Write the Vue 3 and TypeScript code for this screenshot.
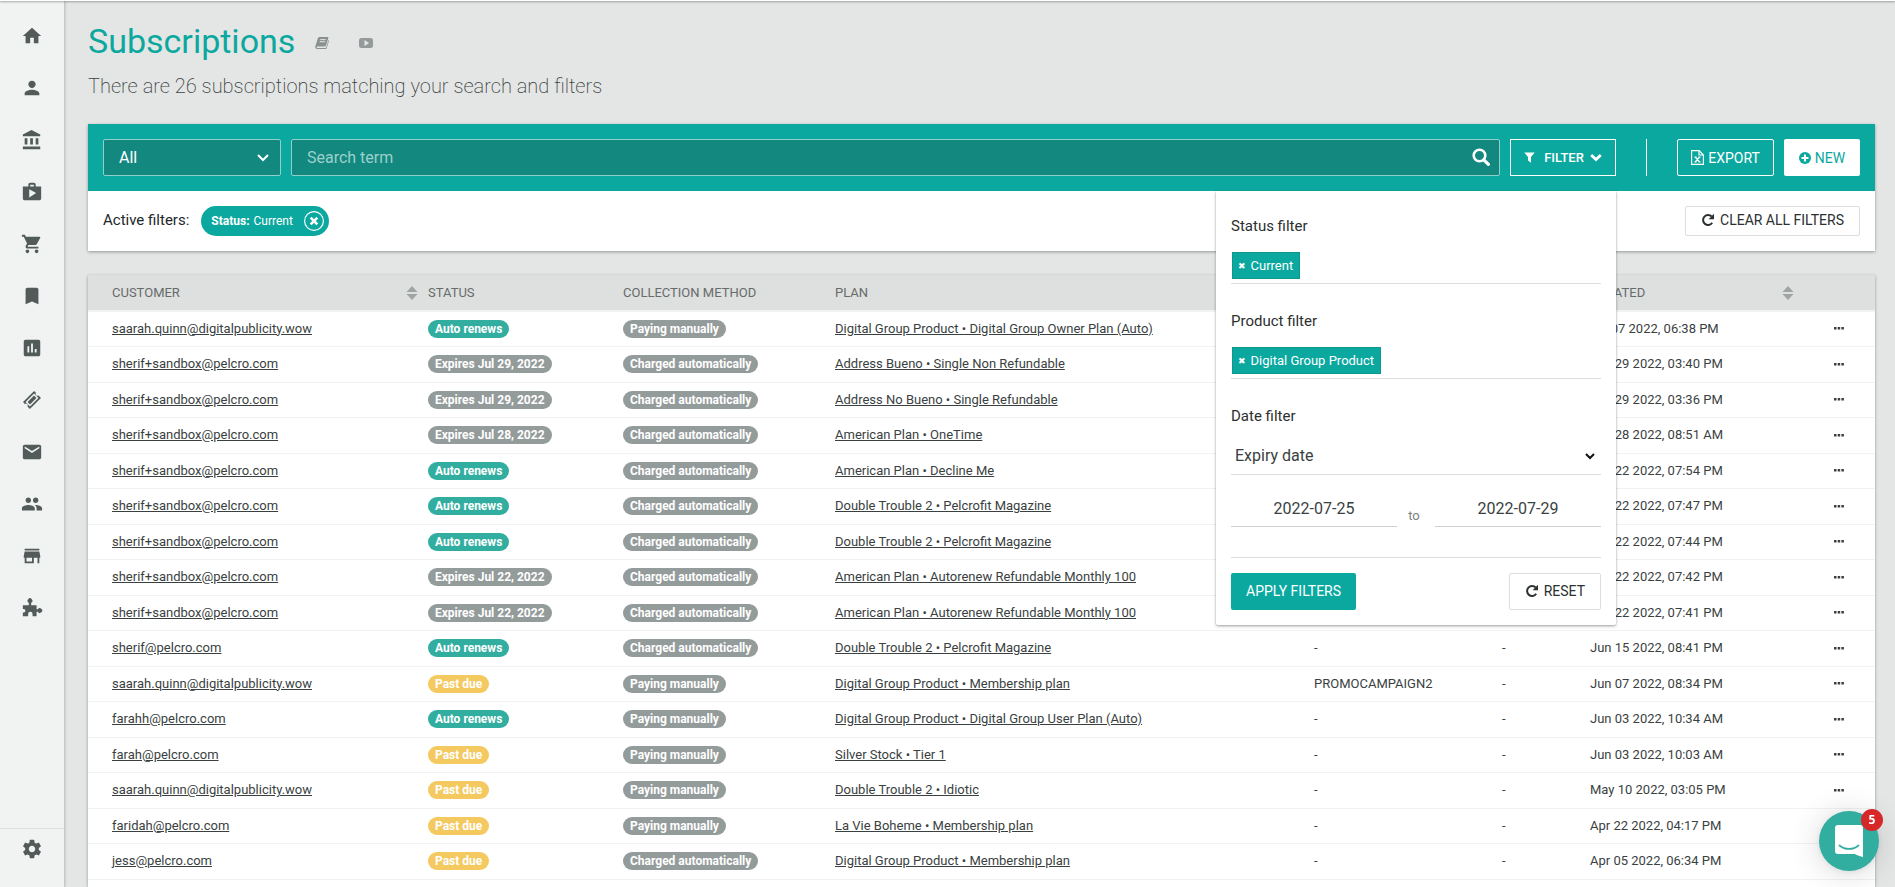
<script setup lang="ts">
import { ref } from 'vue'

interface NavItem { label: string; path: string }
interface Subscription {
  customer: string
  status: string
  tone: 'renews' | 'neutral' | 'due'
  method: string
  plan: string
  coupon: string
  created: string
}

const nav: NavItem[] = [
  { label: 'Home', path: 'M10 20v-6h4v6h5v-8h3L12 3 2 12h3v8z' },
  { label: 'Customers', path: 'M12 12c2.21 0 4-1.79 4-4s-1.79-4-4-4-4 1.79-4 4 1.79 4 4 4zm0 2c-2.67 0-8 1.34-8 4v2h16v-2c0-2.66-5.33-4-8-4z' },
  { label: 'Accounts', path: 'M4 10v7h3v-7H4zm6 0v7h3v-7h-3zM2 22h19v-3H2v3zm14-12v7h3v-7h-3zm-4.500-9L2 6v2h19V6l-9.500-5z' },
  { label: 'Products', path: 'M16 6V4c0-1.110-.89-2-2-2h-4c-1.110 0-2 .89-2 2v2H2v13c0 1.110.89 2 2 2h16c1.110 0 2-.89 2-2V6h-6zm-6-2h4v2h-4V4zM9 18V9l7.500 4L9 18z' },
  { label: 'Orders', path: 'M7 18c-1.100 0-1.990.9-1.990 2S5.900 22 7 22s2-.9 2-2-.9-2-2-2zM1 2v2h2l3.600 7.590-1.350 2.450c-.16.28-.25.61-.25.96 0 1.100.9 2 2 2h12v-2H7.420c-.14 0-.25-.11-.25-.25l.03-.12.9-1.630h7.450c.75 0 1.410-.41 1.750-1.030l3.580-6.490A1 1 0 0 0 20 4H5.210l-.94-2H1zm16 16c-1.100 0-1.990.9-1.990 2s.89 2 1.990 2 2-.9 2-2-.9-2-2-2z' },
  { label: 'Subscriptions', path: 'M17 3H7c-1.100 0-2 .9-2 2v16l7-3 7 3V5c0-1.100-.9-2-2-2z' },
  { label: 'Reports', path: 'M19 3H5c-1.100 0-2 .9-2 2v14c0 1.100.9 2 2 2h14c1.100 0 2-.9 2-2V5c0-1.100-.9-2-2-2zM9 17H7v-7h2v7zm4 0h-2V7h2v10zm4 0h-2v-4h2v4z' },
  { label: 'Coupons', path: 'M14.300 2.200 2.200 14.300l2 2a2 2 0 0 1 2.800 2.800l2.700 2.700L21.800 9.700l-2.700-2.700a2 2 0 0 1-2.800-2.800zM14.200 5l4.800 4.800-9.200 9.200L5 14.200zM14.200 7.200 7.200 14.200l2.600 2.600 7-7z' },
  { label: 'Messages', path: 'M20 4H4c-1.100 0-1.990.9-1.990 2L2 18c0 1.100.9 2 2 2h16c1.100 0 2-.9 2-2V6c0-1.100-.9-2-2-2zm0 4l-8 5-8-5V6l8 5 8-5v2z' },
  { label: 'Users', path: 'M16 11c1.660 0 2.990-1.340 2.990-3S17.660 5 16 5s-3 1.340-3 3 1.340 3 3 3zm-8 0c1.660 0 2.990-1.340 2.990-3S9.660 5 8 5 5 6.340 5 8s1.340 3 3 3zm0 2c-2.330 0-7 1.170-7 3.500V19h14v-2.500c0-2.330-4.670-3.500-7-3.500zm8 0c-.29 0-.62.02-.97.05 1.160.84 1.970 1.970 1.970 3.450V19h6v-2.500c0-2.330-4.670-3.500-7-3.500z' },
  { label: 'Store', path: 'M20 4H4v2h16V4zm1 10v-2l-1-5H4l-1 5v2h1v6h10v-6h4v6h2v-6h1zm-9 4H6v-4h6v4z' },
  { label: 'Integrations', path: 'M2 9h6.500V6.300a2.600 2.600 0 1 1 2.600 0V9H17v4.400h1.300a2.600 2.600 0 1 1 0 2.800H17V21h-4.400v-2.400a2.400 2.400 0 0 0-4.800 0V21H2v-4.200h1a1.800 1.800 0 0 0 0-3.600H2z' },
]

const gear = 'M19.430 12.980c.04-.32.07-.64.07-.98s-.03-.66-.07-.98l2.110-1.650c.19-.15.24-.42.12-.64l-2-3.460c-.12-.22-.39-.3-.61-.22l-2.490 1c-.52-.4-1.080-.73-1.690-.98l-.38-2.650A.488.488 0 0 0 14 2h-4c-.25 0-.46.18-.49.42l-.38 2.650c-.61.25-1.170.59-1.690.98l-2.490-1c-.23-.09-.49 0-.61.22l-2 3.460c-.13.22-.07.49.12.64l2.110 1.650c-.04.32-.07.65-.07.98s.03.66.07.98l-2.110 1.650c-.19.15-.24.42-.12.64l2 3.460c.12.22.39.3.61.22l2.490-1c.52.4 1.080.73 1.690.98l.38 2.650c.03.24.24.42.49.42h4c.25 0 .46-.18.49-.42l.38-2.650c.61-.25 1.170-.59 1.690-.98l2.490 1c.23.09.49 0 .61-.22l2-3.460c.12-.22.07-.49-.12-.64l-2.110-1.650zM12 15.500c-1.930 0-3.500-1.570-3.500-3.500s1.570-3.500 3.500-3.500 3.500 1.570 3.500 3.500-1.570 3.500-3.500 3.500z'

const MANUAL = 'Paying manually'
const AUTO = 'Charged automatically'

function row(customer: string, status: string, method: string, plan: string, created: string, coupon = '-'): Subscription {
  const tone = status === 'Auto renews' ? 'renews' : status === 'Past due' ? 'due' : 'neutral'
  return { customer, status, tone, method, plan, coupon, created }
}

const rows: Subscription[] = [
  row('saarah.quinn@digitalpublicity.wow', 'Auto renews', MANUAL, 'Digital Group Product • Digital Group Owner Plan (Auto)', 'Jul 07 2022, 06:38 PM'),
  row('sherif+sandbox@pelcro.com', 'Expires Jul 29, 2022', AUTO, 'Address Bueno • Single Non Refundable', 'Jun 29 2022, 03:40 PM'),
  row('sherif+sandbox@pelcro.com', 'Expires Jul 29, 2022', AUTO, 'Address No Bueno • Single Refundable', 'Jun 29 2022, 03:36 PM'),
  row('sherif+sandbox@pelcro.com', 'Expires Jul 28, 2022', AUTO, 'American Plan • OneTime', 'Jun 28 2022, 08:51 AM'),
  row('sherif+sandbox@pelcro.com', 'Auto renews', AUTO, 'American Plan • Decline Me', 'Jun 22 2022, 07:54 PM'),
  row('sherif+sandbox@pelcro.com', 'Auto renews', AUTO, 'Double Trouble 2 • Pelcrofit Magazine', 'Jun 22 2022, 07:47 PM'),
  row('sherif+sandbox@pelcro.com', 'Auto renews', AUTO, 'Double Trouble 2 • Pelcrofit Magazine', 'Jun 22 2022, 07:44 PM'),
  row('sherif+sandbox@pelcro.com', 'Expires Jul 22, 2022', AUTO, 'American Plan • Autorenew Refundable Monthly 100', 'Jun 22 2022, 07:42 PM'),
  row('sherif+sandbox@pelcro.com', 'Expires Jul 22, 2022', AUTO, 'American Plan • Autorenew Refundable Monthly 100', 'Jun 22 2022, 07:41 PM'),
  row('sherif@pelcro.com', 'Auto renews', AUTO, 'Double Trouble 2 • Pelcrofit Magazine', 'Jun 15 2022, 08:41 PM'),
  row('saarah.quinn@digitalpublicity.wow', 'Past due', MANUAL, 'Digital Group Product • Membership plan', 'Jun 07 2022, 08:34 PM', 'PROMOCAMPAIGN2'),
  row('farahh@pelcro.com', 'Auto renews', MANUAL, 'Digital Group Product • Digital Group User Plan (Auto)', 'Jun 03 2022, 10:34 AM'),
  row('farah@pelcro.com', 'Past due', MANUAL, 'Silver Stock • Tier 1', 'Jun 03 2022, 10:03 AM'),
  row('saarah.quinn@digitalpublicity.wow', 'Past due', MANUAL, 'Double Trouble 2 • Idiotic', 'May 10 2022, 03:05 PM'),
  row('faridah@pelcro.com', 'Past due', MANUAL, 'La Vie Boheme • Membership plan', 'Apr 22 2022, 04:17 PM'),
  row('jess@pelcro.com', 'Past due', AUTO, 'Digital Group Product • Membership plan', 'Apr 05 2022, 06:34 PM'),
]

const scope = ref('All')
const term = ref('')
const dateField = ref('Expiry date')
const from = ref('2022-07-25')
const to = ref('2022-07-29')
</script>

<template>
  <div class="app">
    <div class="topline"></div>
    <div class="shell">
      <nav class="sidebar" aria-label="Main">
        <div class="nav-list">
          <a v-for="item in nav" :key="item.label" href="#" class="nav-link" :aria-label="item.label">
            <svg class="nav-icon" viewBox="0 0 24 24"><path fill-rule="evenodd" :d="item.path" /></svg>
          </a>
        </div>
        <a href="#" class="nav-link settings" aria-label="Settings">
          <svg class="nav-icon" viewBox="0 0 24 24"><path :d="gear" /></svg>
        </a>
      </nav>

      <main class="content">
        <header class="heading">
          <h1>Subscriptions</h1>
          <a href="#" class="help" aria-label="Documentation">
            <svg width="14" height="14" viewBox="0 0 14 14">
              <path d="M4.500 1h8.200c.6 0 .8.400.6 1l-2.300 7.600c-.2.500-.5.800-1 .8H2.300c-.8 0-1 1.500 0 1.500h8.200c.4 0 .7-.2.800-.6L13.500 4c.4.300.5.600.4 1l-2.200 7.200c-.2.500-.6.800-1.100.8H2.100C.7 13-.1 11.600.3 10.400L2.900 2c.3-.7.900-1 1.600-1z" fill="#8b9191" />
              <path d="M5.300 3.600h5.400M4.700 5.700h5.400" stroke="#e4e6e5" />
            </svg>
          </a>
          <a href="#" class="help video" aria-label="Video guide">
            <svg width="14" height="10" viewBox="0 0 14 10">
              <path fill-rule="evenodd" d="M2.500 0h9A2.500 2.500 0 0 1 14 2.500v5a2.500 2.500 0 0 1-2.500 2.500h-9A2.500 2.500 0 0 1 0 7.500v-5A2.500 2.500 0 0 1 2.500 0zm3 2.100v5.800L10 5z" fill="#949a9a" />
            </svg>
          </a>
        </header>
        <p class="summary">There are 26 subscriptions matching your search and filters</p>

        <section class="card filters">
          <div class="toolbar">
            <div class="scope">
              <select v-model="scope" aria-label="Search in"><option>All</option></select>
              <svg class="caret" width="14" height="10" viewBox="0 0 14 10"><path d="M2 2l5 5 5-5" fill="none" stroke="#fff" stroke-width="2" /></svg>
            </div>
            <div class="search">
              <input v-model="term" type="text" placeholder="Search term" aria-label="Search term" />
              <button type="button" class="magnify" aria-label="Search">
                <svg width="18" height="18" viewBox="0 0 18 18"><circle cx="7.500" cy="7.500" r="5.800" fill="none" stroke="#fff" stroke-width="2.600" /><path d="M11.800 11.800l4.600 4.600" stroke="#fff" stroke-width="3.200" stroke-linecap="round" /></svg>
              </button>
            </div>
            <div class="filter-menu">
              <button type="button" class="btn outline square" aria-expanded="true">
                <svg width="11" height="11" viewBox="0 0 11 11"><path d="M.3.500h10.400L7 5v5.700L4 8.400V5z" fill="#fff" /></svg>
                <span class="filter-label">FILTER</span>
                <svg width="12" height="9" viewBox="0 0 12 9"><path d="M1.200 2L6 6.500 10.800 2" fill="none" stroke="#fff" stroke-width="2.800" /></svg>
              </button>
              <form class="panel" @submit.prevent>
                <h2>Status filter</h2>
                <div class="tags">
                  <span class="tag"><button type="button" aria-label="Remove Current">✖</button>Current</span>
                </div>
                <h2>Product filter</h2>
                <div class="tags">
                  <span class="tag"><button type="button" aria-label="Remove Digital Group Product">✖</button>Digital Group Product</span>
                </div>
                <h2>Date filter</h2>
                <div class="date-field">
                  <select v-model="dateField" aria-label="Date filter"><option>Expiry date</option></select>
                  <svg class="caret" width="12" height="9" viewBox="0 0 12 9"><path d="M2 2l4 4 4-4" fill="none" stroke="#111" stroke-width="2" /></svg>
                </div>
                <div class="range">
                  <input v-model="from" type="text" aria-label="From date" />
                  <span>to</span>
                  <input v-model="to" type="text" aria-label="To date" />
                </div>
                <div class="actions">
                  <button type="submit" class="btn primary">APPLY FILTERS</button>
                  <button type="button" class="btn plain">
                    <svg width="14" height="14" viewBox="0 0 14 14"><path d="M11.200 9.800A5 5 0 1 1 10.700 3.500" fill="none" stroke="#2b3030" stroke-width="2" /><path d="M13 .800v5.400H7.600z" fill="#2b3030" /></svg>
                    RESET
                  </button>
                </div>
              </form>
            </div>
            <span class="divider"></span>
            <button type="button" class="btn outline export">
              <svg width="13" height="15" viewBox="0 0 13 15"><path d="M.6.600h7.600L12.400 5v9.400H.6zM8 .600V5h4.400" fill="none" stroke="#fff" stroke-width="1.200" /><path d="M4.200 7l4.400 5M8.600 7l-4.400 5M3.400 7h2.200M7.400 7h2.200M3.400 12h2.200M7.400 12h2.200" stroke="#fff" stroke-width="1.200" /></svg>
              EXPORT
            </button>
            <button type="button" class="btn new">
              <svg width="12" height="12" viewBox="0 0 12 12"><circle cx="6" cy="6" r="6" fill="#0ba89f" /><path d="M6 2.500v7M2.500 6h7" stroke="#fff" stroke-width="2" /></svg>
              NEW
            </button>
          </div>
          <div class="active">
            <span class="active-label">Active filters:</span>
            <span class="pill">
              <strong>Status:</strong> Current
              <button type="button" aria-label="Remove status filter">
                <svg width="20" height="20" viewBox="0 0 20 20"><circle cx="10" cy="10" r="9.400" fill="none" stroke="#fff" stroke-width="1.200" /><path d="M6.700 6.700l6.600 6.600M13.300 6.700l-6.600 6.600" stroke="#fff" stroke-width="2.600" /></svg>
              </button>
            </span>
            <button type="button" class="btn plain clear">
              <svg width="14" height="14" viewBox="0 0 14 14"><path d="M11.200 9.800A5 5 0 1 1 10.700 3.500" fill="none" stroke="#2b3030" stroke-width="2" /><path d="M13 .800v5.400H7.600z" fill="#2b3030" /></svg>
              CLEAR ALL FILTERS
            </button>
          </div>
        </section>

        <section class="card results">
          <table>
            <colgroup>
              <col class="c-customer" /><col class="c-status" /><col class="c-method" /><col />
              <col class="c-coupon" /><col class="c-qty" /><col class="c-created" /><col class="c-menu" />
            </colgroup>
            <thead>
              <tr>
                <th scope="col">
                  <div class="sortable">CUSTOMER
                    <svg width="12" height="14" viewBox="0 0 12 14"><path d="M6 0l5.500 6H.5zM6 14L.5 8h11z" fill="#a0a4a4" /></svg>
                  </div>
                </th>
                <th scope="col">STATUS</th>
                <th scope="col">COLLECTION METHOD</th>
                <th scope="col">PLAN</th>
                <th></th>
                <th></th>
                <th scope="col">
                  <div class="sortable">CREATED
                    <svg width="12" height="14" viewBox="0 0 12 14"><path d="M6 0l5.500 6H.5zM6 14L.5 8h11z" fill="#a0a4a4" /></svg>
                  </div>
                </th>
                <th></th>
              </tr>
            </thead>
            <tbody>
              <tr v-for="(r, i) in rows" :key="i">
                <td><a href="#">{{ r.customer }}</a></td>
                <td><span class="badge" :class="r.tone">{{ r.status }}</span></td>
                <td><span class="badge neutral">{{ r.method }}</span></td>
                <td><a href="#">{{ r.plan }}</a></td>
                <td>{{ r.coupon }}</td>
                <td>-</td>
                <td>{{ r.created }}</td>
                <td>
                  <button type="button" class="more" aria-label="Row actions">
                    <svg width="10" height="3" viewBox="0 0 10 3"><path d="M0 0h2.500v2.500H0zM3.700 0h2.500v2.500H3.700zM7.400 0h2.500v2.500H7.400z" fill="#3a3f3f" /></svg>
                  </button>
                </td>
              </tr>
            </tbody>
          </table>
        </section>
      </main>
    </div>

    <button type="button" class="chat" aria-label="Open chat">
      <svg width="28" height="32" viewBox="0 0 28 32">
        <path d="M3 0h22a3 3 0 0 1 3 3v29s-5-1-8-3H3a3 3 0 0 1-3-3V3a3 3 0 0 1 3-3z" fill="#fff" />
        <path d="M4.500 20.500c5.500 4.600 13.500 4.600 19 0" fill="none" stroke="#32aea1" stroke-width="1.800" stroke-linecap="round" />
      </svg>
      <span class="count">5</span>
    </button>
  </div>
</template>

<style>
body {
  margin: 0;
  background: #e4e6e5;
}
</style>

<style scoped>
.app {
  height: 100vh;
  overflow: hidden;
  display: flex;
  flex-direction: column;
  background: #e4e6e5;
  color: #3a3f3f;
  font-family: Roboto, "Liberation Sans", sans-serif;
  font-size: 13px;
  line-height: 18px;
}
*, *::before, *::after { box-sizing: border-box; }
button, input, select { font: inherit; color: inherit; margin: 0; }
button { cursor: pointer; }
svg { display: block; flex: none; }

.topline {
  flex: none;
  height: 1px;
  background: #fff;
  box-shadow: 0 1px 2px rgba(0, 0, 0, 0.45);
  position: relative;
  z-index: 3;
}
.shell { flex: 1; min-height: 0; display: flex; }

.sidebar {
  flex: none;
  width: 65px;
  display: flex;
  flex-direction: column;
  justify-content: space-between;
  background: #f1f3f3;
  border-right: 1px solid #c4c8c7;
  box-shadow: 1px 0 2px rgba(0, 0, 0, 0.1);
}
.nav-list { padding-top: 9px; }
.nav-link {
  display: flex;
  align-items: center;
  justify-content: center;
  height: 52px;
}
.nav-icon { width: 22px; height: 22px; fill: #525a5a; }
.settings { height: 59px; padding-bottom: 19px; border-top: 1px solid #dcdfde; }

.content {
  flex: 1;
  min-width: 0;
  display: flex;
  flex-direction: column;
  padding: 16px 20px 0 23px;
}
.heading { display: flex; align-items: center; }
h1 {
  margin: 0;
  font-size: 34px;
  line-height: 48px;
  font-weight: 400;
  color: #0ba89f;
}
.help { margin: 4px 0 0 20px; }
.video { margin-left: 30px; }
.summary {
  margin: 7px 0 24px;
  font-size: 20px;
  line-height: 28px;
  font-weight: 200;
}

.card {
  background: #fff;
  box-shadow: 0 1px 3px rgba(0, 0, 0, 0.35);
}
.filters { margin-bottom: 24px; }
.results { flex: 1; }
.toolbar {
  display: flex;
  align-items: center;
  height: 67px;
  padding: 0 15px;
  background: #0ba89f;
}
.scope { position: relative; width: 178px; margin-right: 10px; }
.scope select, .search input {
  width: 100%;
  height: 37px;
  padding: 0 15px;
  border: 1px solid #8fd0cb;
  border-radius: 2px;
  background: #13887f;
  color: #fff;
  font-size: 16px;
  appearance: none;
  display: block;
}
.scope .caret { position: absolute; right: 11px; top: 14px; pointer-events: none; }
.search { position: relative; flex: 1; margin-right: 10px; }
.search input::placeholder { color: #9cd0cb; opacity: 1; }
.magnify {
  position: absolute;
  right: 10px;
  top: 9px;
  padding: 0;
  border: 0;
  background: none;
}

.btn {
  display: flex;
  align-items: center;
  justify-content: center;
  gap: 4px;
  height: 37px;
  padding: 0 14px;
  border: 1px solid transparent;
  border-radius: 2px;
  font-size: 14px;
  white-space: nowrap;
}
.outline { border-color: #fff; background: #0ba89f; color: #fff; }
.square { width: 106px; border-radius: 0; font-size: 13px; font-weight: 500; }
.filter-label { margin: 0 2px 0 5px; }
.divider { width: 1px; height: 37px; margin: 0 30px; background: #fff; }
.export { width: 97px; margin-right: 10px; }
.new { width: 76px; background: #fff; color: #0ba89f; }
.primary { padding-bottom: 2px; background: #0ba89f; color: #fff; }
.plain {
  gap: 5px;
  padding: 0 15px 2px;
  background: #fff;
  border-color: #dcdfde;
  color: #2b3030;
}

.filter-menu { position: relative; }
.panel {
  position: absolute;
  z-index: 2;
  top: 52px;
  right: 0;
  width: 400px;
  padding: 25px 15px 15px;
  background: #fff;
  border-radius: 0 0 2px 2px;
  box-shadow: 0 1px 3px rgba(0, 0, 0, 0.4);
}
h2 {
  margin: 0;
  font-size: 15px;
  line-height: 20px;
  font-weight: 400;
  color: #2b3030;
}
.tags {
  margin: 15px 0 27px;
  padding: 1px 0 4px;
  border-bottom: 1px solid #dcdfde;
  display: flex;
}
.tag {
  display: flex;
  align-items: center;
  height: 27px;
  margin-left: 1px;
  padding: 0 6px 0 5px;
  border: 1px solid #0c988f;
  background: #0ba89f;
  color: #fff;
}
.tag button {
  padding: 0 5px 0 0;
  border: 0;
  background: none;
  font-family: "DejaVu Sans", sans-serif;
  font-size: 9px;
  font-weight: 700;
}
.date-field { position: relative; margin-top: 11px; }
.date-field select {
  display: block;
  width: 100%;
  height: 38px;
  padding: 0 4px;
  border: 0;
  border-bottom: 1px solid #dcdfde;
  background: #fff;
  font-size: 16px;
  appearance: none;
}
.date-field .caret { position: absolute; right: 5px; top: 15px; pointer-events: none; }
.range {
  display: flex;
  align-items: flex-end;
  margin-top: 15px;
  padding-bottom: 30px;
  border-bottom: 1px solid #dcdfde;
}
.range input {
  flex: 1;
  min-width: 0;
  height: 37px;
  padding: 0;
  border: 0;
  border-bottom: 1px solid #cfd3d2;
  background: none;
  font-size: 16px;
  text-align: center;
}
.range span { width: 38px; text-align: center; color: #7c8282; padding: 0 4px 2px 0; }
.actions { display: flex; justify-content: space-between; margin-top: 15px; }

.active {
  display: flex;
  align-items: center;
  height: 60px;
  padding: 0 15px;
}
.active-label { padding-bottom: 2px; font-size: 15px; color: #222727; }
.pill {
  display: flex;
  align-items: center;
  gap: 4px;
  height: 30px;
  margin-left: 12px;
  padding: 0 5px 0 10px;
  border-radius: 15px;
  background: #0ba89f;
  color: #fff;
  font-size: 12px;
}
.pill button { margin-left: 7px; padding: 0; border: 0; background: none; }
.clear { height: 30px; margin-left: auto; }

table { width: 100%; border-collapse: collapse; table-layout: fixed; }
.c-customer { width: 332px; }
.c-status { width: 195px; }
.c-method { width: 212px; }
.c-coupon { width: 188px; }
.c-qty { width: 88px; }
.c-created { width: 220px; }
.c-menu { width: 73px; }
th, td { padding: 0 8px; text-align: left; font-weight: 400; white-space: nowrap; }
th:first-child, td:first-child { padding: 0 2px 0 24px; }
td:last-child { padding: 0 31px 0 0; }
th {
  height: 36px;
  background: #dee0df;
  border-bottom: 2px solid #f1f3f3;
  color: #666b6b;
}
.sortable { display: flex; align-items: center; justify-content: space-between; }
td { height: 36px; border-bottom: 1px solid #f1f3f3; }
tbody tr:nth-child(odd) td { height: 35px; }
td a { color: inherit; text-decoration: underline; }
.badge {
  display: inline-block;
  height: 18px;
  padding: 0 7px;
  border-radius: 9px;
  color: #fff;
  font-size: 12px;
  font-weight: 700;
}
.neutral { background: #949b9b; }
.renews { background: #32aea1; }
.due { background: #f4c960; }
.more { display: block; margin-left: auto; padding: 4px 0; border: 0; background: none; }

.chat {
  position: fixed;
  right: 16px;
  bottom: 16px;
  z-index: 5;
  width: 60px;
  height: 60px;
  padding: 0;
  border: 0;
  border-radius: 50%;
  background: #32aea1;
  box-shadow: 0 1px 6px rgba(0, 0, 0, 0.08), 0 2px 32px rgba(0, 0, 0, 0.16);
  display: flex;
  align-items: center;
  justify-content: center;
}
.count {
  position: absolute;
  top: -2px;
  right: -4px;
  width: 22px;
  height: 22px;
  border-radius: 50%;
  background: #d62828;
  color: #fff;
  font-family: "Open Sans", sans-serif;
  font-size: 12px;
  line-height: 21px;
  font-weight: 700;
}
</style>
